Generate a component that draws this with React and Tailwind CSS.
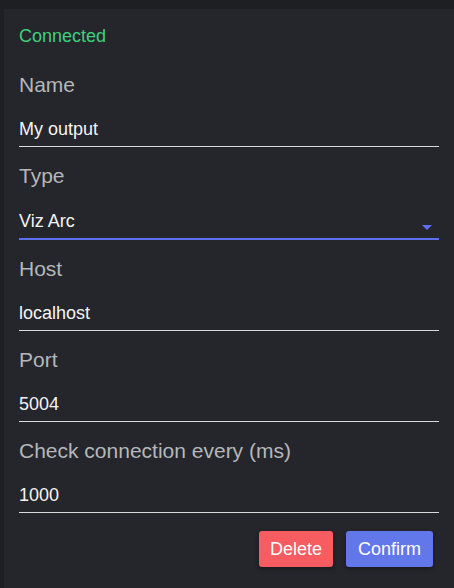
import React from "react";

function Field({ label, value, select = false }) {
  return (
    <div className="flex flex-col">
      <div className="text-[21px] leading-[24px] text-[#b5b7ba]">{label}</div>
      <div
        className={
          select
            ? "relative mt-[21px] pb-[5px] border-b-2 border-[#5c6ff0]"
            : "mt-[20px] pb-[5px] border-b border-[#d8d9da]"
        }
      >
        <div className="text-[18px] leading-[24px] text-[#f4f4f4]">{value}</div>
        {select && (
          <svg
            className="absolute right-[7px] top-[16px]"
            width="10"
            height="5"
            viewBox="0 0 10 5"
          >
            <path d="M0 0 L10 0 L5 5 Z" fill="#5c6ff0" />
          </svg>
        )}
      </div>
    </div>
  );
}

export default function App() {
  return (
    <div
      className="w-[454px] h-[588px] bg-[#1e1f23] pt-[9px] pl-[4px] overflow-hidden"
      style={{ fontFamily: '"Liberation Sans", Arial, sans-serif' }}
    >
      <div className="h-full bg-[#24262b] pt-[15px] pl-[15px] pr-[15px] flex flex-col">
        <div className="text-[18px] leading-[24px] text-[#3fd07a]">Connected</div>
        <div className="mt-[25px] flex flex-col gap-[17px]">
          <Field label="Name" value="My output" />
          <Field label="Type" value="Viz Arc" select />
          <Field label="Host" value="localhost" />
          <Field label="Port" value="5004" />
          <Field label="Check connection every (ms)" value="1000" />
        </div>
        <div className="mt-[18px] flex justify-end gap-[13px] pr-[6px]">
          <button className="h-[36px] px-[11px] rounded-[3px] bg-[#f65c60] text-white text-[18px] leading-[24px] shadow-[0_2px_4px_rgba(0,0,0,0.35)]">
            Delete
          </button>
          <button className="h-[36px] px-[12px] rounded-[3px] bg-[#6277ea] text-white text-[18px] leading-[24px] shadow-[0_2px_4px_rgba(0,0,0,0.35)]">
            Confirm
          </button>
        </div>
      </div>
    </div>
  );
}
